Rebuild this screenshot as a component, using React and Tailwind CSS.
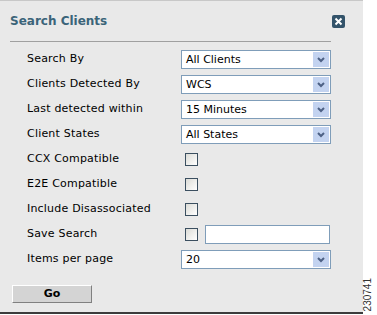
import React from "react";

const font = { fontFamily: '"DejaVu Sans", Verdana, sans-serif' };

const Select = ({ value }) => (
  <div className="flex h-[19px] w-[150px] items-center border border-[#7f9db9] bg-white pl-[4px] pr-[1px]">
    <span className="flex-1 text-[11px] leading-none text-black">{value}</span>
    <span className="flex h-[15px] w-[16px] items-center justify-center bg-[#c3d3f0]">
      <svg width="8" height="6" viewBox="0 0 8 6">
        <path d="M1 1 L4 4 L7 1" fill="none" stroke="#4d6185" strokeWidth="2" />
      </svg>
    </span>
  </div>
);

const Check = () => (
  <span className="block h-[13px] w-[13px] border border-[#3b4f60] bg-gradient-to-br from-[#dcdcd7] to-white" />
);

const Row = ({ label, children }) => (
  <div className="flex h-[25px] items-center">
    <span className="w-[154px] text-[11px] tracking-[0.2px] text-black">{label}</span>
    {children}
  </div>
);

export default function App() {
  return (
    <div className="flex h-[315px] w-[377px] bg-white" style={font}>
      <div className="flex h-[314px] w-[363px] flex-col border-t border-[#c8c8c8] border-b-2 border-b-[#3c3c3c] bg-[#e9e9e9]">
        <div className="flex h-[40px] items-center justify-between pl-[10px] pr-[18px]">
          <span className="text-[12px] font-bold text-[#3b6479]">Search Clients</span>
          <span className="flex h-[13px] w-[13px] items-center justify-center rounded-[2px] bg-[#33536a]">
            <svg width="9" height="9" viewBox="0 0 9 9">
              <path d="M1.5 1.5 L7.5 7.5 M7.5 1.5 L1.5 7.5" stroke="white" strokeWidth="2" />
            </svg>
          </span>
        </div>
        <div className="ml-[10px] mr-[32px] h-px bg-[#a0a0a0]" />
        <div className="flex flex-col pl-[27px] pt-[5px]">
          <Row label="Search By"><Select value="All Clients" /></Row>
          <Row label="Clients Detected By"><Select value="WCS" /></Row>
          <Row label="Last detected within"><Select value="15 Minutes" /></Row>
          <Row label="Client States"><Select value="All States" /></Row>
          <Row label="CCX Compatible"><span className="pl-[4px]"><Check /></span></Row>
          <Row label="E2E Compatible"><span className="pl-[4px]"><Check /></span></Row>
          <Row label="Include Disassociated"><span className="pl-[4px]"><Check /></span></Row>
          <Row label="Save Search">
            <span className="flex items-center gap-[7px] pl-[4px]">
              <Check />
              <span className="block h-[19px] w-[125px] border border-[#7f9db9] bg-white" />
            </span>
          </Row>
          <Row label="Items per page"><Select value="20" /></Row>
        </div>
        <div className="pl-[12px] pt-[13px]">
          <button className="flex h-[18px] w-[80px] items-center justify-center border border-t-white border-l-white border-r-[#808080] border-b-[#808080] bg-[#d4d4d4] text-[11px] font-bold text-black">
            Go
          </button>
        </div>
      </div>
      <div className="flex flex-1 flex-col justify-end pb-[4px]">
        <span className="text-[10px] leading-none text-[#333] [writing-mode:vertical-rl] rotate-180" style={{ fontFamily: '"Liberation Sans", Arial, sans-serif' }}>
          230741
        </span>
      </div>
    </div>
  );
}
